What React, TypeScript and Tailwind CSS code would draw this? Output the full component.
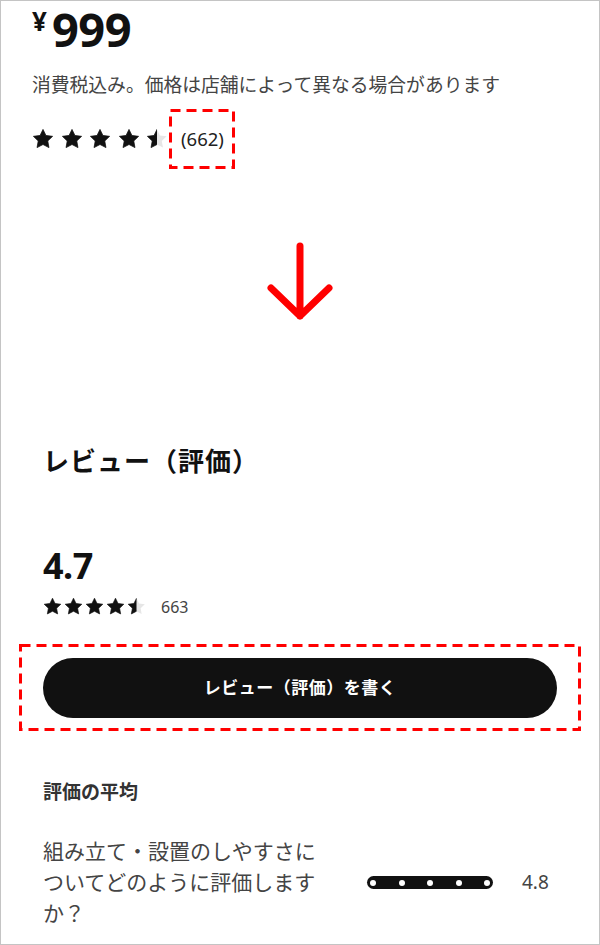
import React from 'react';

const STAR = 'M12 1.5l3.2 6.6 7.3 1-5.3 5 1.3 7.3L12 18l-6.5 3.4 1.3-7.3-5.3-5 7.3-1L12 1.5z';

const Star: React.FC<{ size: number; fill: 'full' | 'half'; id: string }> = ({ size, fill, id }) => (
  <svg width={size} height={size} viewBox="0 0 24 24" className="shrink-0">
    <defs>
      <clipPath id={id}>
        <rect x="0" y="0" width="12" height="24" />
      </clipPath>
    </defs>
    <path d={STAR} fill="#e6e6e6" />
    <path d={STAR} fill="#111" stroke="#111" strokeWidth="0.8" strokeLinejoin="round" clipPath={fill === 'half' ? `url(#${id})` : undefined} />
  </svg>
);

const Stars: React.FC<{ size: number; gap: string; prefix: string }> = ({ size, gap, prefix }) => (
  <div className={`flex items-center ${gap}`}>
    {[0, 1, 2, 3].map(i => (
      <Star key={i} size={size} fill="full" id={`${prefix}-${i}`} />
    ))}
    <Star size={size} fill="half" id={`${prefix}-half`} />
  </div>
);

const DashBox: React.FC<{ className?: string; children: React.ReactNode }> = ({ className, children }) => (
  <div className={`relative ${className ?? ''}`}>
    <svg className="absolute inset-0 w-full h-full pointer-events-none overflow-visible">
      <rect x="1.5" y="1.5" width="calc(100% - 3px)" height="calc(100% - 3px)" fill="none" stroke="#ff0000" strokeWidth="3" strokeDasharray="10 6" />
    </svg>
    {children}
  </div>
);

export default function App() {
  return (
    <div
      className="w-[600px] h-[945px] bg-white border border-[#c4c4c4] overflow-hidden text-[#111]"
      style={{ fontFamily: '"Noto Sans", "Noto Sans CJK JP", sans-serif' }}
    >
      <div className="pl-[31px]">
        <div className="flex items-start h-[58px]">
          <span className="text-[26px] font-bold leading-[30px] mt-[5px] mr-[5px]">¥</span>
          <span className="text-[47px] font-bold leading-[60px] tracking-[-0.5px] -mt-[2px]">999</span>
        </div>
        <p className="text-[18.8px] text-[#444] leading-[24px] mt-[14px] whitespace-nowrap">
          消費税込み。価格は店舗によって異なる場合があります
        </p>
        <div className="flex items-center mt-[12px]">
          <Stars size={22} gap="gap-[6.5px]" prefix="top" />
          <DashBox className="ml-[1px] w-[66px] h-[60px] flex items-center justify-center">
            <span className="text-[18.5px] text-[#222] pl-[1px]">(662)</span>
          </DashBox>
        </div>
      </div>

      <div className="flex justify-center mt-[73px]">
        <svg width="70" height="80" viewBox="0 0 70 80">
          <path d="M35 4v70M6 46l29 28 29-28" fill="none" stroke="#ff0000" strokeWidth="7" strokeLinecap="round" strokeLinejoin="round" />
        </svg>
      </div>

      <div className="px-[42px]">
        <h2 className="text-[26px] font-bold leading-[36px] mt-[121px] tracking-[1px]">レビュー（評価）</h2>
        <div className="text-[36px] font-bold leading-none mt-[69px] tracking-[-0.5px]">4.7</div>
        <div className="flex items-center mt-[13px]">
          <Stars size={19} gap="gap-[2px]" prefix="bot" />
          <span className="text-[16px] text-[#444] ml-[15px] leading-none">663</span>
        </div>
      </div>

      <DashBox className="mx-[18px] mt-[28px] h-[87px] px-[24px] flex items-center">
        <button className="w-full h-[60px] rounded-full bg-[#111] text-white text-[17px] font-bold tracking-[0.5px]">
          レビュー（評価）を書く
        </button>
      </DashBox>

      <div className="px-[42px]">
        <h3 className="text-[19px] font-bold text-[#333] leading-[26px] mt-[48px]">評価の平均</h3>
        <div className="flex items-center mt-[31px]">
          <p className="w-[285px] text-[21px] text-[#444] leading-[31px]">
            組み立て・設置のしやすさについてどのように評価しますか？
          </p>
          <div className="ml-[39px] w-[126px] h-[13px] rounded-full bg-[#111] flex items-center justify-between px-[3px]">
            {[0, 1, 2, 3, 4].map(i => (
              <span key={i} className="w-[6px] h-[6px] rounded-full bg-white" />
            ))}
          </div>
          <span className="ml-[29px] text-[19px] text-[#444]">4.8</span>
        </div>
      </div>
    </div>
  );
}
